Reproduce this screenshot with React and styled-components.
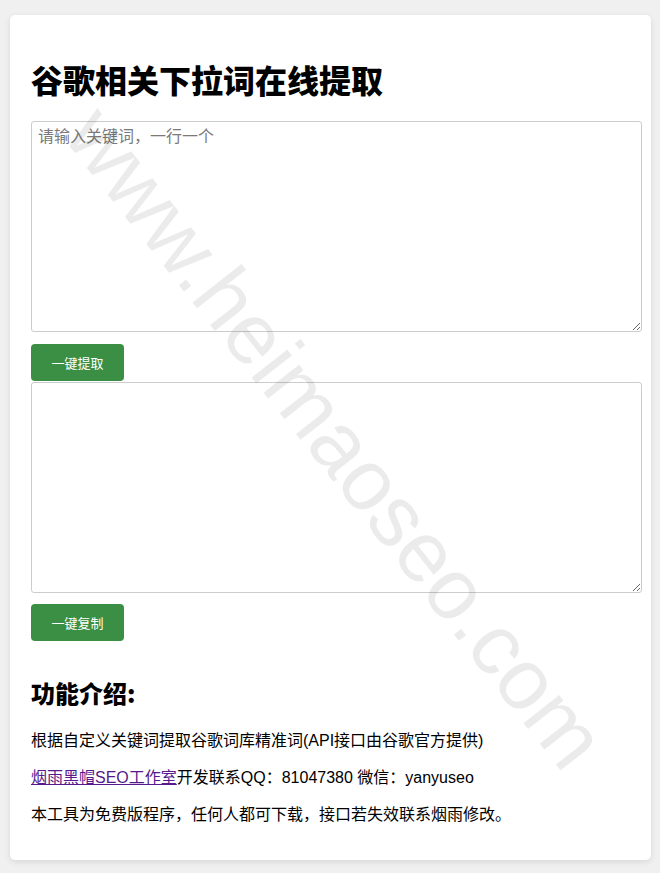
import React from "react";
import styled, { createGlobalStyle } from "styled-components";

const Global = createGlobalStyle`
  html, body {
    margin: 0;
    padding: 0;
    background: #f0f0f0;
  }
  body {
    font-family: "Liberation Sans", Arial, "Noto Sans CJK SC", sans-serif;
    color: #000;
  }
`;

const Page = styled.div`
  position: relative;
  overflow: hidden;
  padding: 15px 9px 13px 10px;
`;

const Card = styled.div`
  background: #fff;
  border-radius: 5px;
  box-shadow: 0 2px 6px rgba(0, 0, 0, 0.1);
  padding: 48px 9px 35px 21px;
  display: flex;
  flex-direction: column;
  align-items: flex-start;
`;

const Title = styled.h1`
  margin: 0 0 26px;
  font-family: "Noto Sans CJK SC", sans-serif;
  font-size: 32px;
  line-height: 32px;
  font-weight: 900;
`;

const TextArea = styled.textarea`
  box-sizing: border-box;
  width: 100%;
  height: 211px;
  margin: 0;
  padding: 3px 6px;
  border: 1px solid #cccccc;
  border-radius: 3px;
  font-family: "Noto Sans CJK SC", sans-serif;
  font-size: 16px;
  line-height: 20px;
  color: #333;
  resize: both;
  outline: none;
  background: transparent;
  &::placeholder {
    color: #7a7a7a;
  }
`;

const Button = styled.button`
  margin: ${(p) => p.$mt}px 0 ${(p) => p.$mb}px;
  width: 93px;
  height: 37px;
  padding: 0;
  border: none;
  border-radius: 4px;
  background: #3a8f45;
  color: #fff;
  font-family: "Noto Sans CJK SC", sans-serif;
  font-size: 13px;
  cursor: pointer;
`;

const SubTitle = styled.h2`
  margin: 0 0 25px;
  font-family: "Noto Sans CJK SC", sans-serif;
  font-size: 24px;
  line-height: 24px;
  font-weight: 900;
`;

const Para = styled.p`
  margin: 0 0 16px;
  font-size: 16px;
  line-height: 21px;
  &:last-child {
    margin-bottom: 0;
  }
`;

const Link = styled.a`
  color: #551a8b;
  text-decoration: underline;
`;

const Watermark = styled.div`
  position: absolute;
  left: -72px;
  top: 394px;
  width: 817px;
  height: 86px;
  line-height: 86px;
  font-family: "Liberation Sans", Arial, sans-serif;
  font-size: 86px;
  font-weight: 400;
  color: rgba(0, 0, 0, 0.08);
  text-align: center;
  white-space: nowrap;
  transform: rotate(51.8deg);
  pointer-events: none;
  user-select: none;
`;

export default function App() {
  return (
    <Page>
      <Global />
      <Card>
        <Title>谷歌相关下拉词在线提取</Title>
        <TextArea placeholder="请输入关键词，一行一个" />
        <Button $mt={12} $mb={1}>一键提取</Button>
        <TextArea />
        <Button $mt={11} $mb={40}>一键复制</Button>
        <SubTitle>功能介绍:</SubTitle>
        <Para>根据自定义关键词提取谷歌词库精准词(API接口由谷歌官方提供)</Para>
        <Para>
          <Link href="#">烟雨黑帽SEO工作室</Link>开发联系QQ：81047380 微信：yanyuseo
        </Para>
        <Para>本工具为免费版程序，任何人都可下载，接口若失效联系烟雨修改。</Para>
      </Card>
      <Watermark>www.heimaoseo.com</Watermark>
    </Page>
  );
}
